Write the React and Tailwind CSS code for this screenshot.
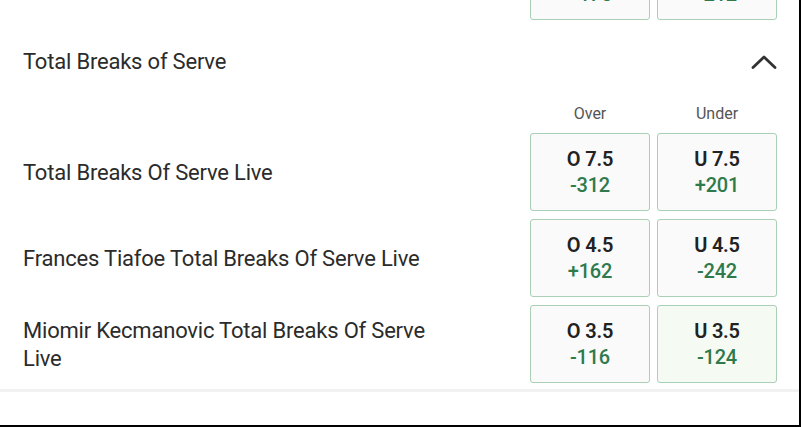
import React from "react";

const rows = [
  { label: "Total Breaks Of Serve Live", over: ["O 7.5", "-312"], under: ["U 7.5", "+201"] },
  { label: "Frances Tiafoe Total Breaks Of Serve Live", over: ["O 4.5", "+162"], under: ["U 4.5", "-242"] },
  { label: "Miomir Kecmanovic Total Breaks Of Serve Live", over: ["O 3.5", "-116"], under: ["U 3.5", "-124"], hot: true },
];

const OddsButton = ({ line, odds, active }) => (
  <button
    className={`w-[120px] h-[78px] flex flex-col items-center justify-center rounded-[3px] border border-[#a9cfb5] ${
      active ? "bg-[#f5fbf3]" : "bg-[#fafafa]"
    }`}
  >
    <span className="text-[20px] leading-[26px] font-semibold tracking-[-0.2px] text-[#222]">{line}</span>
    <span className="text-[20px] leading-[26px] font-medium tracking-[-0.2px] text-[#2f7a4d]">{odds}</span>
  </button>
);

export default function App() {
  return (
    <div className="w-[801px] h-[427px] overflow-hidden bg-white border-r-2 border-b-2 border-black font-['Roboto',sans-serif]">
      {/* previous market, scrolled mostly out of view */}
      <div className="h-[20px] overflow-hidden flex items-end justify-end gap-[7px] pr-[22px]">
        <OddsButton line="O 6.5" odds="+175" />
        <OddsButton line="U 6.5" odds="-212" />
      </div>

      <div className="h-[82px] flex items-center justify-between pl-[23px] pr-[22px] pt-[1px]">
        <h2 className="text-[22px] tracking-[-0.2px] text-[#2b2b2b]">Total Breaks of Serve</h2>
        <svg width="26" height="16" viewBox="0 0 26 16" fill="none">
          <path d="M2 13.5 L13 3 L24 13.5" stroke="#333" strokeWidth="2.8" strokeLinecap="round" strokeLinejoin="round" />
        </svg>
      </div>

      <div className="flex justify-end gap-[7px] pr-[22px] h-[22px] mb-[9px] pt-[1px]">
        <div className="w-[120px] text-center text-[16px] leading-[22px] text-[#555]">Over</div>
        <div className="w-[120px] text-center text-[16px] leading-[22px] text-[#555]">Under</div>
      </div>

      <div className="flex flex-col gap-2">
        {rows.map((r) => (
          <div key={r.label} className="flex items-center pl-[23px] pr-[22px]">
            <div className="flex-1 pt-[2px]">
              <p className="max-w-[430px] text-[22px] leading-[28px] tracking-[-0.2px] text-[#2b2b2b]">{r.label}</p>
            </div>
            <div className="flex gap-[7px]">
              <OddsButton line={r.over[0]} odds={r.over[1]} />
              <OddsButton line={r.under[0]} odds={r.under[1]} active={r.hot} />
            </div>
          </div>
        ))}
      </div>

      <div className="mt-[6px] h-[3px] bg-[#f2f2f2]" />
    </div>
  );
}
